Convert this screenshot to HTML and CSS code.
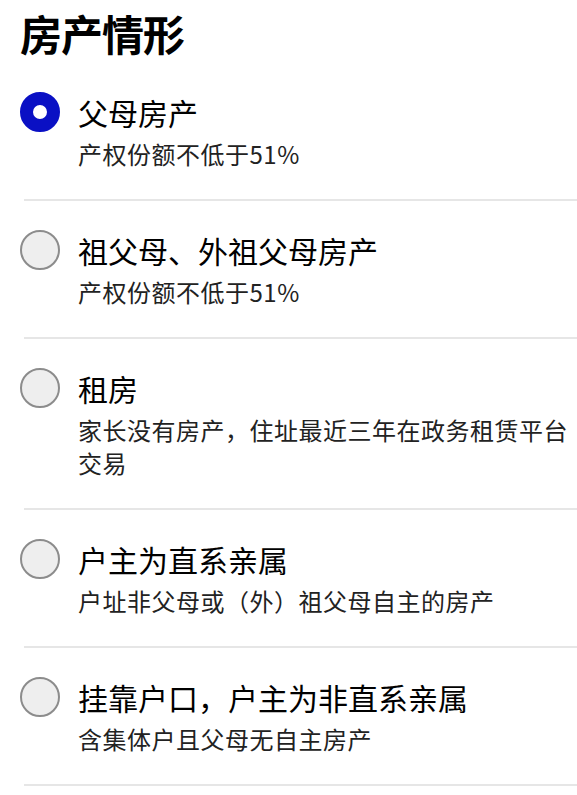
FILE: index.html
```html
<!DOCTYPE html>
<html lang="zh-CN">
<head>
    <meta charset="UTF-8">
    <meta name="viewport" content="width=device-width, initial-scale=1.0">
    <title>房产情形</title>
    <link rel="stylesheet" href="styles.css">
</head>
<body>
    <div class="page">
        <h1 class="heading">房产情形</h1>

        <!-- Options -->
        <ul class="options">
            <li class="option">
                <span class="radio checked"></span>
                <div class="option-text">
                    <div class="option-title">父母房产</div>
                    <div class="option-desc">产权份额不低于51%</div>
                </div>
            </li>
            <li class="option">
                <span class="radio"></span>
                <div class="option-text">
                    <div class="option-title">祖父母、外祖父母房产</div>
                    <div class="option-desc">产权份额不低于51%</div>
                </div>
            </li>
            <li class="option">
                <span class="radio"></span>
                <div class="option-text">
                    <div class="option-title">租房</div>
                    <div class="option-desc">家长没有房产，住址最近三年在政务租赁平台交易</div>
                </div>
            </li>
            <li class="option">
                <span class="radio"></span>
                <div class="option-text">
                    <div class="option-title">户主为直系亲属</div>
                    <div class="option-desc">户址非父母或（外）祖父母自主的房产</div>
                </div>
            </li>
            <li class="option">
                <span class="radio"></span>
                <div class="option-text">
                    <div class="option-title">挂靠户口，户主为非直系亲属</div>
                    <div class="option-desc">含集体户且父母无自主房产</div>
                </div>
            </li>
        </ul>
    </div>
</body>
</html>
```

FILE: styles.css
```css
* {
    margin: 0;
    padding: 0;
    box-sizing: border-box;
}
body {
    font-family: "Noto Sans CJK SC", "Noto Sans", sans-serif;
    background: #fff;
    color: #111;
}
.page {
    padding: 6px 0 0 20px;
}
.heading {
    font-size: 42px;
    line-height: 54px;
    font-weight: 700;
    letter-spacing: -1px;
    color: #000;
    margin-bottom: 3px;
}
.options {
    list-style: none;
    padding-left: 4px;
}
.option {
    display: flex;
    align-items: flex-start;
    gap: 18px;
    padding: 29px 0 29px 0;
    border-bottom: 2px solid #e6e6e6;
}
.radio {
    flex: none;
    width: 40px;
    height: 40px;
    margin-left: -4px;
    border-radius: 50%;
    border: 2px solid #8c8c8c;
    background: #eeeeee;
}
.radio.checked {
    border: 13px solid #0a10c4;
    background: #fff;
}
.option-text {
    flex: 1;
}
.option-title {
    font-size: 30px;
    line-height: 40px;
    font-weight: 400;
    color: #000;
    margin-bottom: 5px;
}
.option-desc {
    font-size: 24px;
    line-height: 33px;
    letter-spacing: 0.5px;
    color: #222;
}
```
